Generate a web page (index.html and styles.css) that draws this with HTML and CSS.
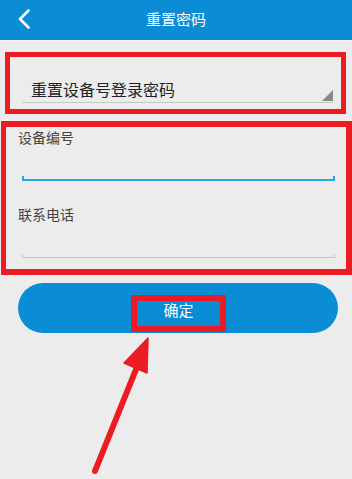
FILE: index.html
```html
<!DOCTYPE html>
<html lang="zh-CN">
<head>
    <meta charset="UTF-8">
    <meta name="viewport" content="width=device-width, initial-scale=1.0">
    <title>重置密码</title>
    <link rel="stylesheet" href="styles.css">
</head>
<body>

<header class="top-bar">
    <svg class="back-btn" width="12" height="20" viewBox="0 0 12 20">
        <path d="M10.5 1.5 L2 10 L10.5 18.5" fill="none" stroke="#fff" stroke-width="2.6" stroke-linecap="round" stroke-linejoin="round"/>
    </svg>
    <span class="title">重置密码</span>
    <span class="spacer"></span>
</header>

<!-- Reset type -->
<section class="mark-box type-box">
    <div class="select-row">
        重置设备号登录密码
        <span class="select-arrow"></span>
    </div>
</section>

<!-- Form fields -->
<section class="mark-box form-box">
    <div class="field-label">设备编号</div>
    <div class="field-input active"><span class="line"></span></div>
    <div class="field-label second">联系电话</div>
    <div class="field-input"><span class="line"></span></div>
</section>

<button class="ok-btn"><span class="ok-text">确定</span></button>

<svg class="pointer" width="352" height="479" viewBox="0 0 352 479">
    <line x1="95" y1="471" x2="139" y2="362" stroke="#ec1c24" stroke-width="6" stroke-linecap="round"/>
    <polygon points="148,338 124,363 147,373" fill="#ec1c24" stroke="#ec1c24" stroke-width="1.5" stroke-linejoin="round"/>
</svg>

</body>
</html>
```

FILE: styles.css
```css
/* General */
body {
    margin: 0;
    background-color: #ececec;
    font-family: "Noto Sans CJK SC", "Noto Sans", sans-serif;
    color: #333;
    position: relative;
    height: 479px;
    overflow: hidden;
}

/* Top bar */
.top-bar {
    height: 40px;
    background: #0b8dd6;
    border-bottom: 1px solid #f4f6f8;
    display: flex;
    align-items: center;
    padding: 0 18px;
}

.back-btn {
    width: 12px;
    height: 20px;
    margin-top: -2px;
}

.title {
    flex: 1;
    text-align: center;
    color: #fff;
    font-size: 15px;
    margin-top: -3px;
}

.spacer {
    width: 12px;
}

/* Red marker boxes */
.mark-box {
    border: 5px solid #ec1c24;
}

.type-box {
    margin: 11px 6px 0 5px;
    padding: 22px 8px 6px 12px;
}

.select-row {
    position: relative;
    font-size: 16px;
    line-height: 20px;
    padding: 0 0 3px 9px;
    border-bottom: 1px solid #c8c8c8;
    color: #222;
}

.select-arrow {
    position: absolute;
    right: 0;
    bottom: 1px;
    width: 0;
    height: 0;
    border-left: 11px solid transparent;
    border-bottom: 11px solid #8a8a8a;
}

.form-box {
    margin: 7px 0 0 1px;
    border-width: 6px 6px 6px 5px;
    padding: 0 11px 11px 16px;
}

.field-label {
    font-size: 14px;
    line-height: 20px;
    color: #444;
    margin-left: -4px;
}

.field-label.second {
    margin-top: 23px;
}

.field-input {
    height: 34px;
    display: flex;
    align-items: flex-end;
}

.field-input .line {
    flex: 1;
    height: 3px;
    border: 1px solid #c4c4c4;
    border-top: none;
}

.field-input.active .line {
    height: 3px;
    border: 2px solid #29a6df;
    border-top: none;
}

/* Confirm button */
.ok-btn {
    display: flex;
    justify-content: center;
    align-items: flex-end;
    width: 320px;
    height: 50px;
    margin: 8px 0 0 18px;
    padding: 0 0 1px 0;
    border: none;
    border-radius: 25px;
    background: #0b8dd6;
    font-family: inherit;
}

.ok-text {
    color: #fff;
    font-size: 15px;
    line-height: 17px;
    padding: 0 26px 8px;
    border: 6px solid #ec1c24;
    margin-left: 1px;
}

/* Annotation arrow */
.pointer {
    position: absolute;
    left: 0;
    top: 0;
    pointer-events: none;
}
```
